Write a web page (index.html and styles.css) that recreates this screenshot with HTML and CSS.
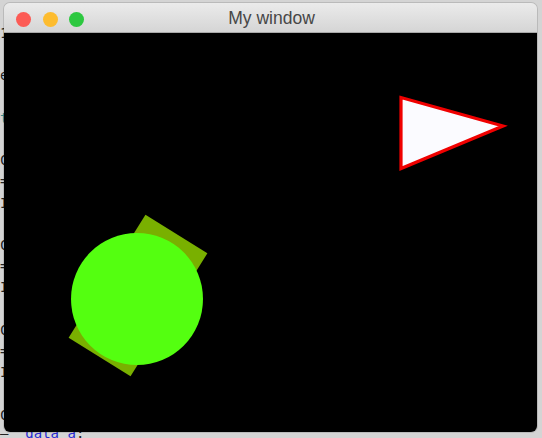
FILE: index.html
```html
<!DOCTYPE html>
<html>
<head>
<meta charset="utf-8">
<link rel="stylesheet" href="styles.css">
</head>
<body>
<pre class="backdrop"><span class="l1">1</span>

e

<span class="teal">t</span>

C
=
I

C
=
I

C
=
I

C
<span class="last">— _<span class="blue">data</span> <span class="blue">a</span>:</span></pre>
<div class="window">
  <div class="titlebar">
    <div class="lights">
      <span class="light red"></span>
      <span class="light yellow"></span>
      <span class="light green"></span>
    </div>
    <div class="title">My window</div>
  </div>
  <div class="canvas">
    <svg class="scene" width="533" height="399" viewBox="0 0 533 399">
      <rect x="-36.5" y="-72.5" width="73" height="145" fill="#79b000" transform="translate(134 262.5) rotate(32)"/>
      <circle cx="133" cy="266" r="66" fill="#54ff10"/>
      <polygon points="397,64.5 397,135.5 499,93" fill="#fbfbff" stroke="#f00000" stroke-width="3.2" stroke-linejoin="miter"/>
    </svg>
  </div>
</div>
</body>
</html>
```
FILE: styles.css
```css
html, body {
  margin: 0;
  padding: 0;
}
body {
  width: 542px;
  height: 438px;
  background: #d4d4d4;
  position: relative;
  overflow: hidden;
}
.backdrop {
  margin: 0;
  padding: 23px 0 0 0;
  font-family: "DejaVu Sans Mono", monospace;
  font-size: 14px;
  line-height: 21.2px;
  color: #222;
}
.teal { color: #3a8a8a; }
.blue { color: #2a2ad0; }
.last { position: relative; top: -3px; }
.window {
  position: absolute;
  left: 4px;
  top: 3px;
  width: 533px;
  height: 429px;
  border-radius: 6px;
  overflow: hidden;
  display: flex;
  flex-direction: column;
  box-shadow: 0 0 0 1px rgba(0,0,0,0.12);
}
.titlebar {
  height: 29px;
  border-bottom: 1px solid #a9a9a9;
  background: linear-gradient(#ebebeb, #d5d5d5);
  display: flex;
  align-items: center;
  position: relative;
}
.lights {
  display: flex;
  gap: 11.5px;
  padding-left: 12px;
  padding-top: 3px;
}
.light {
  width: 15px;
  height: 15px;
  border-radius: 50%;
  display: block;
}
.red { background: #fc5b55; }
.yellow { background: #fdbc2f; }
.green { background: #2dc840; }
.title {
  position: absolute;
  left: 0;
  right: 0;
  top: 5px;
  text-align: center;
  font-family: "Liberation Sans", "Open Sans", sans-serif;
  font-size: 17.5px;
  color: #474747;
  padding-left: 2px;
}
.canvas {
  flex: 1;
  background: #000;
}
.scene {
  display: block;
}
```
